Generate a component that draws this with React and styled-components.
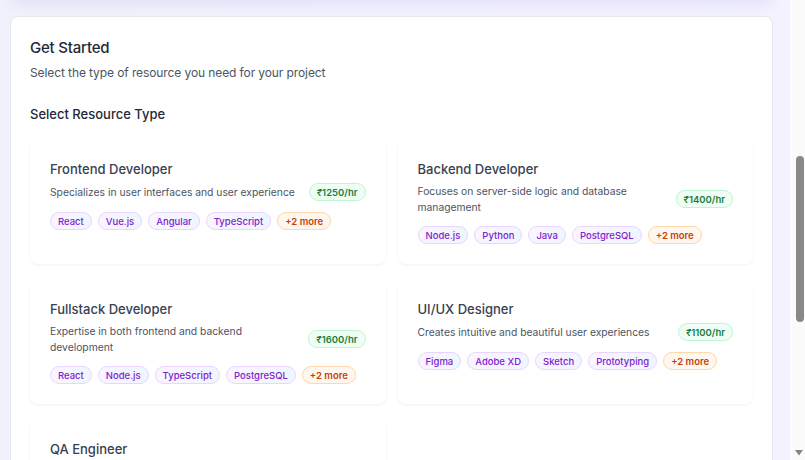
import React, { useLayoutEffect, useRef, useState } from 'react'
import styled, { createGlobalStyle } from 'styled-components'

const roles = [
  {
    id: 'frontend',
    title: 'Frontend Developer',
    description: 'Specializes in user interfaces and user experience',
    rate: 1250,
    skills: ['React', 'Vue.js', 'Angular', 'TypeScript'],
    more: 2,
  },
  {
    id: 'backend',
    title: 'Backend Developer',
    description: 'Focuses on server-side logic and database management',
    rate: 1400,
    skills: ['Node.js', 'Python', 'Java', 'PostgreSQL'],
    more: 2,
  },
  {
    id: 'fullstack',
    title: 'Fullstack Developer',
    description: 'Expertise in both frontend and backend development',
    rate: 1600,
    skills: ['React', 'Node.js', 'TypeScript', 'PostgreSQL'],
    more: 2,
  },
  {
    id: 'design',
    title: 'UI/UX Designer',
    description: 'Creates intuitive and beautiful user experiences',
    rate: 1100,
    skills: ['Figma', 'Adobe XD', 'Sketch', 'Prototyping'],
    more: 2,
  },
  {
    id: 'qa',
    title: 'QA Engineer',
    description: 'Ensures product quality through testing and automation',
    rate: 1000,
    skills: ['Selenium', 'Jest', 'Cypress', 'Postman'],
    more: 2,
  },
]

const ARROW = 15

const App = () => {
  const scrollRef = useRef(null)
  const [thumb, setThumb] = useState({ top: 0, height: 0 })

  // page is shown scrolled down to the resource picker
  useLayoutEffect(() => {
    const el = scrollRef.current
    if (!el) return
    el.scrollTop = 432
    const track = el.clientHeight - ARROW
    setThumb({
      top: (track * el.scrollTop) / el.scrollHeight,
      height: (track * el.clientHeight) / el.scrollHeight,
    })
  }, [])

  return (
    <>
      <GlobalStyle />
      <Shell>
        <Viewport ref={scrollRef}>
          <Content>
            <HeroCard />

            <MainCard>
              <Title>Get Started</Title>
              <Subtitle>Select the type of resource you need for your project</Subtitle>

              <SectionLabel>Select Resource Type</SectionLabel>

              <RoleGrid>
                {roles.map((role) => (
                  <RoleCard key={role.id}>
                    <RoleTitle>{role.title}</RoleTitle>
                    <RoleRow>
                      <RoleDesc>{role.description}</RoleDesc>
                      <Rate>₹{role.rate}/hr</Rate>
                    </RoleRow>
                    <Tags>
                      {role.skills.map((skill) => (
                        <Tag key={skill}>{skill}</Tag>
                      ))}
                      <Tag $more>+{role.more} more</Tag>
                    </Tags>
                  </RoleCard>
                ))}
              </RoleGrid>
            </MainCard>
          </Content>
        </Viewport>

        <ScrollBar>
          <Track>
            <Thumb style={{ marginTop: thumb.top, height: thumb.height }} />
          </Track>
          <ArrowButton>
            <svg width="8" height="6" viewBox="0 0 8 6">
              <path d="M0 0 H8 L4 5.5 Z" fill="#858585" />
            </svg>
          </ArrowButton>
        </ScrollBar>
      </Shell>
    </>
  )
}

const GlobalStyle = createGlobalStyle`
  html, body {
    margin: 0;
    height: 100%;
    overflow: hidden;
  }
  body {
    font-family: Inter, "Noto Sans", sans-serif;
    background: #f3f2fc;
  }
  * { box-sizing: border-box; }
`

const Shell = styled.div`
  display: flex;
  height: 100vh;
`

const Viewport = styled.div`
  flex: 1;
  min-width: 0;
  overflow: hidden;
  background: linear-gradient(90deg, #f1f1fb 0%, #f4f2fe 100%);
`

const ScrollBar = styled.div`
  width: 15px;
  flex-shrink: 0;
  display: flex;
  flex-direction: column;
  background: #fbfbfb;
`

const Track = styled.div`
  flex: 1;
  display: flex;
  flex-direction: column;
  align-items: flex-end;
  padding-right: 1px;
`

const Thumb = styled.div`
  width: 8px;
  border-radius: 4px;
  background: #898989;
`

const ArrowButton = styled.div`
  height: 15px;
  display: flex;
  align-items: center;
  justify-content: center;
  padding-left: 2px;
`

const Content = styled.div`
  padding: 16px 17px 236px 10px;
`

const HeroCard = styled.div`
  height: 416px;
  background: #ffffff;
  border-radius: 10px;
  box-shadow: 0 4px 14px rgba(99, 102, 241, 0.12);
`

const MainCard = styled.section`
  margin-top: 16px;
  background: #ffffff;
  border: 1px solid #e6e7ef;
  border-radius: 8px;
  padding: 20px 19px 19px;
`

const Title = styled.h2`
  margin: 0;
  font-size: 15px;
  line-height: 22px;
  font-weight: 500;
  letter-spacing: -0.2px;
  color: #1f2937;
`

const Subtitle = styled.p`
  margin: 5px 0 0;
  font-size: 12px;
  line-height: 18px;
  letter-spacing: -0.1px;
  color: #4b5563;
`

const SectionLabel = styled.h3`
  margin: 22px 0 0;
  font-size: 13px;
  line-height: 20px;
  font-weight: 500;
  color: #1f2937;
`

const RoleGrid = styled.div`
  margin-top: 16px;
  display: grid;
  grid-template-columns: 1fr 1fr;
  column-gap: 12px;
  row-gap: 16px;
`

const RoleCard = styled.div`
  background: #ffffff;
  border-radius: 8px;
  padding: 20px;
  box-shadow: 0 1px 3px rgba(15, 23, 42, 0.06);
  min-height: 124px;
`

const RoleTitle = styled.h4`
  margin: 0;
  font-size: 13px;
  line-height: 18px;
  font-weight: 500;
  color: #374151;
`

const RoleRow = styled.div`
  margin-top: 5px;
  display: flex;
  align-items: center;
  gap: 6px;
`

const RoleDesc = styled.p`
  flex: 1;
  margin: 0;
  font-size: 10.3px;
  line-height: 16px;
  color: #4b5563;
`

const Rate = styled.span`
  flex-shrink: 0;
  height: 18px;
  padding: 0 7px;
  display: inline-flex;
  align-items: center;
  border: 1px solid #bbf7d0;
  border-radius: 9px;
  background: #f0fdf4;
  color: #15803d;
  font-size: 9.5px;
  font-weight: 600;
`

const Tags = styled.div`
  margin-top: 11px;
  display: flex;
  flex-wrap: wrap;
  gap: 6px;
`

const Tag = styled.span`
  height: 18px;
  padding: 0 7px;
  display: inline-flex;
  align-items: center;
  border-radius: 9px;
  font-size: 9.5px;
  font-weight: ${(p) => (p.$more ? 600 : 500)};
  border: 1px solid ${(p) => (p.$more ? '#fed7aa' : '#e9d5ff')};
  background: ${(p) => (p.$more ? '#fff7ed' : 'linear-gradient(90deg, #faf5ff, #eff6ff)')};
  color: ${(p) => (p.$more ? '#c2410c' : '#7e22ce')};
`

export default App
